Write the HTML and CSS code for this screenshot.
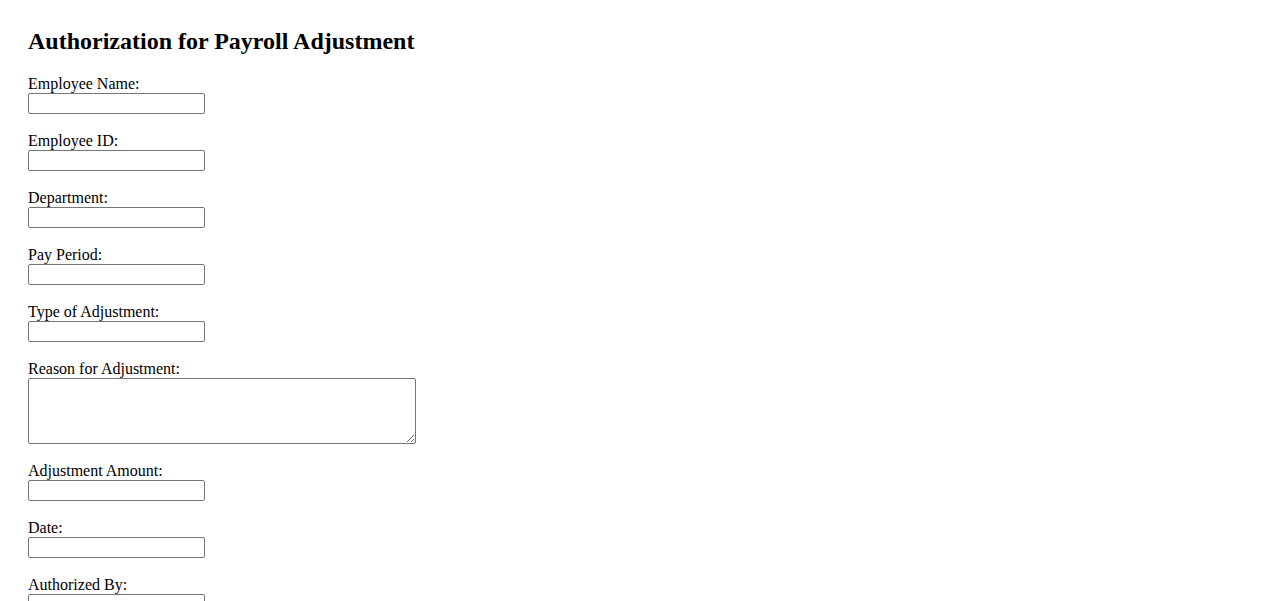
FILE: index.html
```html
<!DOCTYPE html>
<html>
<head>
<meta charset="utf-8">
<title>Authorization for Payroll Adjustment</title>
<link rel="stylesheet" href="styles.css">
</head>
<body>
<div class="page">
  <h2 class="title">Authorization for Payroll Adjustment</h2>
  <form class="form">
    <div class="field"><label class="label" for="name">Employee Name:</label><input class="input" type="text" id="name"></div>
    <div class="field"><label class="label" for="eid">Employee ID:</label><input class="input" type="text" id="eid"></div>
    <div class="field"><label class="label" for="dept">Department:</label><input class="input" type="text" id="dept"></div>
    <div class="field"><label class="label" for="period">Pay Period:</label><input class="input" type="text" id="period"></div>
    <div class="field"><label class="label" for="type">Type of Adjustment:</label><input class="input" type="text" id="type"></div>
    <div class="field"><label class="label" for="reason">Reason for Adjustment:</label><textarea class="textarea" id="reason"></textarea></div>
    <div class="field"><label class="label" for="amount">Adjustment Amount:</label><input class="input" type="text" id="amount"></div>
    <div class="field"><label class="label" for="date">Date:</label><input class="input" type="text" id="date"></div>
    <div class="field"><label class="label" for="auth">Authorized By:</label><input class="input" type="text" id="auth"></div>
  </form>
</div>
</body>
</html>
```
FILE: styles.css
```css
html, body {
  margin: 0;
  padding: 0;
  background: #ffffff;
}
body {
  font-family: "Liberation Serif", "Times New Roman", serif;
  font-size: 16px;
  color: #000000;
}
.page {
  padding: 27px 28px 0 28px;
}
.title {
  font-size: 24px;
  font-weight: bold;
  line-height: 28px;
  margin: 0 0 20px 0;
}
.form {
  display: flex;
  flex-direction: column;
}
.field {
  display: flex;
  flex-direction: column;
  align-items: flex-start;
  margin-bottom: 18px;
}
.label {
  display: block;
  line-height: 18px;
  height: 18px;
}
.input {
  box-sizing: border-box;
  width: 177px;
  height: 21px;
  margin: 0;
  padding: 1px 2px;
  border: 1px solid #767676;
  border-radius: 2px;
  background: #ffffff;
  font-family: Arial, "Liberation Sans", sans-serif;
  font-size: 13.33px;
}
.textarea {
  box-sizing: border-box;
  width: 388px;
  height: 66px;
  margin: 0;
  padding: 2px;
  border: 1px solid #767676;
  border-radius: 2px;
  background: #ffffff;
  font-family: "Liberation Mono", monospace;
  font-size: 13.33px;
}
```
